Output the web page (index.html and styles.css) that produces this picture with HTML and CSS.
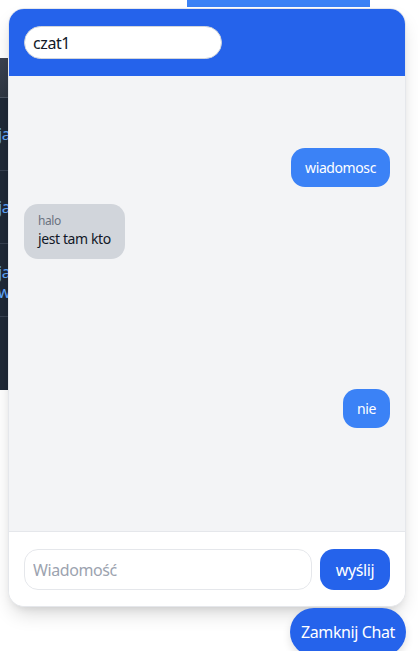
FILE: index.html
```html
<!DOCTYPE html>
<html lang="pl">
<head>
<meta charset="utf-8">
<title>Chat</title>
<link rel="stylesheet" href="styles.css">
</head>
<body>
<div class="backdrop">
  <div class="topbar"></div>
  <aside class="sidepanel">
    <div class="side-head"></div>
    <div class="side-item"><span>jak</span></div>
    <div class="side-item"><span>jak</span></div>
    <div class="side-item two"><span>jak</span><span>wy</span></div>
    <div class="side-item last"></div>
  </aside>
</div>

<section class="chat">
  <header class="chat-head">
    <input class="room" type="text" value="czat1">
  </header>
  <div class="messages">
    <div class="msg mine first">wiadomosc</div>
    <div class="msg theirs">
      <div class="author">halo</div>
      <div>jest tam kto</div>
    </div>
    <div class="msg mine far">nie</div>
  </div>
  <footer class="chat-foot">
    <input class="compose" type="text" placeholder="Wiadomość">
    <button class="send">wyślij</button>
  </footer>
</section>

<button class="close-chat">Zamknij Chat</button>
</body>
</html>
```

FILE: styles.css
```css
* { box-sizing: border-box; }
html, body { margin: 0; padding: 0; }
body {
  width: 418px;
  height: 651px;
  overflow: hidden;
  background: #ffffff;
  font-family: "Segoe UI", "Noto Sans", "Open Sans", sans-serif;
  letter-spacing: -0.4px;
  position: relative;
}

.backdrop { position: absolute; inset: 0; }
.topbar {
  position: absolute;
  left: 187px;
  top: 0;
  width: 183px;
  height: 7px;
  background: #3b82f6;
}
.sidepanel {
  position: absolute;
  left: 0;
  top: 58px;
  width: 8px;
  height: 332px;
  background: #1f2937;
  overflow: hidden;
  display: flex;
  flex-direction: column;
}
.side-head {
  height: 40px;
  background: linear-gradient(#3b4250, #2f3743);
  border-bottom: 1px solid #4b5563;
}
.side-item {
  height: 73px;
  border-bottom: 1px solid #374151;
  display: flex;
  flex-direction: column;
  justify-content: center;
  color: #60a5fa;
  font-size: 16px;
  line-height: 20px;
  white-space: nowrap;
}
.side-item span { margin-left: -2px; }
.side-item.two { justify-content: flex-start; padding-top: 18px; }
.side-item.last { border-bottom: none; flex: 1; }

.chat {
  position: absolute;
  left: 8px;
  top: 8px;
  width: 398px;
  height: 599px;
  border-radius: 16px;
  border: 1px solid #e5e7eb;
  background: #ffffff;
  overflow: hidden;
  display: flex;
  flex-direction: column;
  box-shadow: 0 10px 20px -5px rgba(0,0,0,0.18), 0 4px 8px -4px rgba(0,0,0,0.1);
}
.chat-head {
  background: #2563eb;
  height: 67px;
  padding: 17px 15px 0;
  flex: none;
}
.room {
  display: block;
  width: 198px;
  height: 33px;
  border-radius: 999px;
  border: 1px solid #d1d5db;
  background: #fff;
  padding: 0 8px;
  font: inherit;
  font-size: 16px;
  letter-spacing: inherit;
  color: #111827;
  outline: none;
}

.messages {
  flex: 1;
  background: #f3f4f6;
  padding: 0 15px;
  display: flex;
  flex-direction: column;
}
.msg {
  max-width: 75%;
  border-radius: 14px;
  padding: 9px 14px;
  font-size: 14px;
  line-height: 21px;
}
.mine {
  align-self: flex-end;
  background: #3b82f6;
  color: #ffffff;
}
.theirs {
  align-self: flex-start;
  background: #d1d5db;
  color: #111827;
  margin-top: 17px;
  padding: 9px 14px 10px;
}
.first { margin-top: 72px; }
.far { margin-top: 130px; }
.author {
  font-size: 12px;
  line-height: 16px;
  color: #6b7280;
}
.theirs div:last-child { line-height: 20px; }

.chat-foot {
  flex: none;
  height: 75px;
  border-top: 1px solid #e5e7eb;
  background: #ffffff;
  padding: 17px 15px 0;
  display: flex;
  gap: 8px;
  align-items: flex-start;
}
.compose {
  flex: 1;
  height: 41px;
  border: 1px solid #e5e7eb;
  border-radius: 14px;
  padding: 0 8px;
  font: inherit;
  font-size: 16px;
  letter-spacing: inherit;
  color: #111827;
  outline: none;
  min-width: 0;
}
.compose::placeholder { color: #9ca3af; }
.send {
  width: 70px;
  height: 41px;
  border: none;
  border-radius: 14px;
  background: #2563eb;
  color: #ffffff;
  font: inherit;
  font-size: 16px;
  letter-spacing: inherit;
  padding: 0;
}

.close-chat {
  position: absolute;
  left: 290px;
  top: 608px;
  width: 116px;
  height: 48px;
  border: none;
  border-radius: 999px;
  background: #2563eb;
  color: #ffffff;
  font: inherit;
  font-size: 16px;
  letter-spacing: inherit;
  padding: 0;
  box-shadow: 0 4px 8px rgba(0,0,0,0.12);
}
```
